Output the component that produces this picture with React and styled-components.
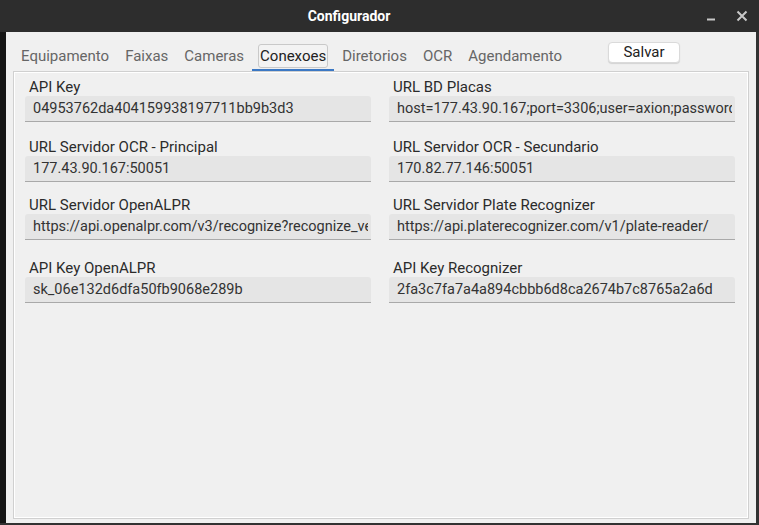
import React, { useState } from "react";
import styled, { createGlobalStyle } from "styled-components";

const GlobalStyle = createGlobalStyle`
  html, body {
    margin: 0;
    padding: 0;
    background: #303030;
    font-family: Roboto, "Liberation Sans", sans-serif;
  }
`;

const Frame = styled.div`
  width: 759px;
  height: 525px;
  display: flex;
  flex-direction: column;
  background: #323232;
`;

const TitleBar = styled.div`
  height: 32px;
  display: flex;
  align-items: center;
  background: #2d2d2d;
  flex-shrink: 0;
`;

const Title = styled.div`
  flex: 1;
  text-align: center;
  color: #ffffff;
  font-weight: 700;
  font-size: 14px;
`;

const WinButtons = styled.div`
  width: 61px;
  display: flex;
  align-items: center;
  gap: 20px;
  padding-left: 8px;
  box-sizing: border-box;
`;

const Body = styled.div`
  flex: 1;
  display: flex;
  flex-direction: column;
  background: #f0f0f0;
  margin: 0 3px 2px 0;
  border-left: 6px solid #151515;
  padding: 0 7px 4px 7px;
`;

const TabBar = styled.div`
  display: flex;
  align-items: flex-start;
  margin-top: 10px;
`;

const TabWrap = styled.div`
  margin-top: 2px;
  padding: 0 6px 1px;
  border-bottom: 2px solid ${(p) => (p.$active ? "#3b78c4" : "transparent")};
`;

const Tab = styled.div`
  height: 22px;
  line-height: 23px;
  padding: 0 1px;
  font-size: 15px;
  border: 1px solid ${(p) => (p.$active ? "#c9c9c9" : "transparent")};
  border-radius: 3px;
  background: ${(p) => (p.$active ? "#f3f3f3" : "transparent")};
  color: ${(p) => (p.$active ? "#222222" : "#666666")};
  cursor: pointer;
  white-space: nowrap;
`;

const SaveButton = styled.button`
  margin-left: 38px;
  width: 72px;
  height: 21px;
  padding: 0;
  font: inherit;
  font-size: 15px;
  line-height: 19px;
  color: #222222;
  background: #ffffff;
  border: 1px solid #dadada;
  border-radius: 4px;
  box-shadow: 0 1px 1px rgba(0, 0, 0, 0.12);
`;

const Panel = styled.div`
  flex: 1;
  border: 1px solid #d0d0d0;
  box-shadow: inset 0 0 0 1px #ffffff;
  padding: 7px 13px 0 11px;
`;

const Row = styled.div`
  display: grid;
  grid-template-columns: 346px 346px;
  column-gap: 18px;
  margin-top: ${(p) => p.$top || 0}px;
`;

const Field = styled.div`
  display: flex;
  flex-direction: column;
`;

const Label = styled.div`
  font-size: 15px;
  line-height: 17px;
  height: 17px;
  padding-left: 4px;
  color: #2b2b2b;
  white-space: nowrap;
`;

const Input = styled.input`
  box-sizing: border-box;
  width: 100%;
  height: 26px;
  margin: 0;
  padding: 0 3px 0 8px;
  font-family: Roboto, "Liberation Sans", sans-serif;
  font-size: 14.5px;
  color: #333333;
  background: #e5e5e5;
  border: none;
  border-bottom: 1px solid #a9a9a9;
  border-radius: 3px 3px 0 0;
  outline: none;
`;

const tabs = [
  "Equipamento",
  "Faixas",
  "Cameras",
  "Conexoes",
  "Diretorios",
  "OCR",
  "Agendamento",
];

const rows = [
  {
    top: 0,
    fields: [
      ["API Key", "04953762da404159938197711bb9b3d3"],
      ["URL BD Placas", "host=177.43.90.167;port=3306;user=axion;password=axion"],
    ],
  },
  {
    top: 17,
    fields: [
      ["URL Servidor OCR - Principal", "177.43.90.167:50051"],
      ["URL Servidor OCR - Secundario", "170.82.77.146:50051"],
    ],
  },
  {
    top: 15,
    fields: [
      [
        "URL Servidor OpenALPR",
        "https://api.openalpr.com/v3/recognize?recognize_vehicle=0&country=br",
      ],
      [
        "URL Servidor Plate Recognizer",
        "https://api.platerecognizer.com/v1/plate-reader/",
      ],
    ],
  },
  {
    top: 20,
    fields: [
      ["API Key OpenALPR", "sk_06e132d6dfa50fb9068e289b"],
      ["API Key Recognizer", "2fa3c7fa7a4a894cbbb6d8ca2674b7c8765a2a6d"],
    ],
  },
];

function App() {
  const [active, setActive] = useState("Conexoes");

  return (
    <Frame>
      <GlobalStyle />
      <TitleBar>
        <Title>Configurador</Title>
        <WinButtons>
          <svg width="10" height="12" viewBox="0 0 10 12">
            <line x1="1" y1="9.5" x2="9" y2="9.5" stroke="#c8c8c8" strokeWidth="2" />
          </svg>
          <svg width="12" height="12" viewBox="0 0 12 12">
            <path d="M1.5 1.5 L10.5 10.5 M10.5 1.5 L1.5 10.5" stroke="#c8c8c8" strokeWidth="2" />
          </svg>
        </WinButtons>
      </TitleBar>
      <Body>
        <TabBar>
          {tabs.map((t) => (
            <TabWrap key={t} $active={t === active} onClick={() => setActive(t)}>
              <Tab $active={t === active}>{t}</Tab>
            </TabWrap>
          ))}
          <SaveButton type="button">Salvar</SaveButton>
        </TabBar>
        <Panel>
          {rows.map((row, i) => (
            <Row key={i} $top={row.top}>
              {row.fields.map(([label, value]) => (
                <Field key={label}>
                  <Label>{label}</Label>
                  <Input readOnly value={value} />
                </Field>
              ))}
            </Row>
          ))}
        </Panel>
      </Body>
    </Frame>
  );
}

export default App;
